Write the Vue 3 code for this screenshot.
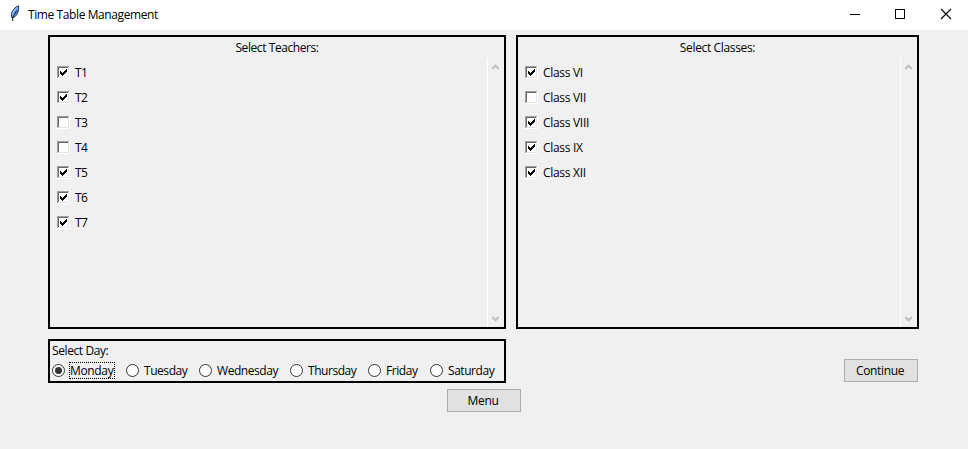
<script setup>
import { ref } from 'vue'

const groups = ref([
  {
    key: 'teachers',
    title: 'Select Teachers:',
    items: [
      { label: 'T1', on: true },
      { label: 'T2', on: true },
      { label: 'T3', on: false },
      { label: 'T4', on: false },
      { label: 'T5', on: true },
      { label: 'T6', on: true },
      { label: 'T7', on: true },
    ],
  },
  {
    key: 'classes',
    title: 'Select Classes:',
    items: [
      { label: 'Class VI', on: true },
      { label: 'Class VII', on: false },
      { label: 'Class VIII', on: true },
      { label: 'Class IX', on: true },
      { label: 'Class XII', on: true },
    ],
  },
])

const days = [
  { name: 'Monday', width: 74 },
  { name: 'Tuesday', width: 73 },
  { name: 'Wednesday', width: 91 },
  { name: 'Thursday', width: 78 },
  { name: 'Friday', width: 62 },
  { name: 'Saturday', width: 66 },
]
const day = ref('Monday')
</script>

<template>
  <div class="window">
    <header class="titlebar">
      <svg class="feather" width="12" height="17" viewBox="0 0 12 17">
        <path d="M9.500.8C6.500 1.500 2.500 6 2.300 10l.5 2.600 1.700.2C8 10.500 10.300 6 9.500.8Z" fill="#5c9cec" stroke="#1a1a1a" stroke-width=".9" />
        <path d="M8.300 2.500C6 4 4 7 3.500 10" fill="none" stroke="#8fc0fa" stroke-width="1.200" />
        <path d="M7.800 5.500 3.700 12.500v3.500" fill="none" stroke="#111" stroke-width=".9" />
      </svg>
      <span class="caption">Time Table Management</span>
      <svg class="controls" width="138" height="30" viewBox="0 0 138 30" shape-rendering="crispEdges">
        <path d="M20 14.5h10" stroke="#000" />
        <rect x="65.500" y="9.500" width="9" height="9" fill="none" stroke="#000" />
        <path d="M111 9l10 10M121 9l-10 10" stroke="#000" stroke-width="1.100" shape-rendering="auto" />
      </svg>
    </header>

    <main class="body">
      <section class="lists">
        <div v-for="g in groups" :key="g.key" class="panel" :class="g.key">
          <h2 class="heading"><span>{{ g.title }}</span></h2>
          <div class="scroll-area">
            <ul class="items">
              <li v-for="item in g.items" :key="item.label" @click="item.on = !item.on">
                <svg class="box" width="13" height="13" viewBox="0 0 13 13" shape-rendering="crispEdges">
                  <path d="M0 0h13v13H0z" fill="#fff" />
                  <path d="M0 0h12v1H1v11H0z" fill="#a0a0a0" />
                  <path d="M1 1h10v1H2v9H1z" fill="#696969" />
                  <path d="M11 1h1v11H1v-1h10z" fill="#e3e3e3" />
                  <path v-if="item.on" d="M9 3h1v3H9v1H8v1H7v1H6v1H5V9H4V8H3V5h1v1h1v1h1V6h1V5h1V4h1z" fill="#000" />
                </svg>
                <span>{{ item.label }}</span>
              </li>
            </ul>
            <div class="scrollbar">
              <svg width="7" height="6" viewBox="0 0 7 6"><path d="M.2 5 3.500 1.700 6.800 5" fill="none" stroke="#bfbfbf" stroke-width="2" /></svg>
              <svg width="7" height="6" viewBox="0 0 7 6"><path d="M.2 1 3.500 4.300 6.800 1" fill="none" stroke="#bfbfbf" stroke-width="2" /></svg>
            </div>
          </div>
        </div>
      </section>

      <section class="bottom">
        <div class="day-panel">
          <h2 class="day-heading">Select Day:</h2>
          <div class="days">
            <div v-for="d in days" :key="d.name" class="day" :style="{ width: d.width + 'px' }" @click="day = d.name">
              <svg width="13" height="13" viewBox="0 0 13 13">
                <circle cx="6.500" cy="6.500" r="6" fill="#fff" stroke="#333" />
                <circle v-if="day === d.name" cx="6.500" cy="6.500" r="3.500" fill="#333" />
              </svg>
              <span class="day-name" :class="{ focused: day === d.name }">{{ d.name }}</span>
            </div>
          </div>
        </div>
        <button class="btn continue">Continue</button>
      </section>
      <footer class="foot"><button class="btn menu">Menu</button></footer>
    </main>
  </div>
</template>

<style>
body {
  background: #f0f0f0;
}
</style>

<style scoped>
.window {
  width: 968px;
  height: 449px;
  overflow: hidden;
  background: #f0f0f0;
  color: #000;
  font: 12px/16px "Open Sans", "Noto Sans", sans-serif;
  letter-spacing: -0.4px;
}
.window * {
  box-sizing: border-box;
}
.titlebar {
  display: flex;
  align-items: flex-start;
  height: 30px;
  padding-left: 9px;
  background: #fff;
}
.feather {
  margin: 5px 7px 0 0;
}
.caption {
  padding-top: 7px;
}
.controls {
  margin-left: auto;
}
.body {
  padding: 5px 49px 0 48px;
}
.lists {
  display: flex;
  gap: 10px;
  height: 294px;
}
.panel {
  display: flex;
  flex-direction: column;
  border: 2px solid #000;
}
.teachers {
  width: 458px;
}
.classes {
  width: 403px;
}
.heading {
  height: 21px;
  margin: 0;
  padding-top: 3px;
  font: inherit;
  letter-spacing: -0.42px;
  text-align: center;
}
.classes .heading {
  letter-spacing: -0.35px;
}
.scroll-area {
  display: flex;
  flex: 1;
}
.items {
  flex: 1;
  margin: 0;
  padding: 2px 0 0 7px;
  list-style: none;
  letter-spacing: -0.3px;
}
.teachers .items {
  letter-spacing: -0.6px;
}
.items li {
  display: flex;
  align-items: center;
  gap: 5px;
  height: 25px;
}
.scrollbar {
  display: flex;
  flex-direction: column;
  align-items: flex-start;
  justify-content: space-between;
  width: 17px;
  padding: 6px 0 5px 4px;
  border-left: 1px solid #fff;
}
.bottom {
  display: flex;
  justify-content: space-between;
  align-items: flex-start;
  margin-top: 10px;
}
.day-panel {
  width: 458px;
  height: 44px;
  border: 2px solid #000;
}
.day-heading {
  height: 21px;
  margin: 0;
  padding: 2px 0 0 2px;
  font: inherit;
}
.days {
  display: flex;
  padding-left: 2px;
}
.day {
  display: flex;
  align-items: center;
  gap: 4px;
  height: 17px;
  letter-spacing: -0.45px;
}
.day-name {
  height: 17px;
  padding-left: 1px;
  line-height: 18px;
  white-space: nowrap;
}
.focused {
  width: 46px;
  letter-spacing: -0.35px;
  outline: 1px dotted #000;
  outline-offset: -1px;
}
.btn {
  width: 74px;
  height: 23px;
  padding: 0 2px 0 0;
  border: 1px solid #adadad;
  background: #e1e1e1;
  color: #000;
  font: inherit;
  letter-spacing: -0.35px;
}
.continue {
  margin: 20px 1px 0 0;
}
.foot {
  padding: 6px 0 0 399px;
}
</style>
